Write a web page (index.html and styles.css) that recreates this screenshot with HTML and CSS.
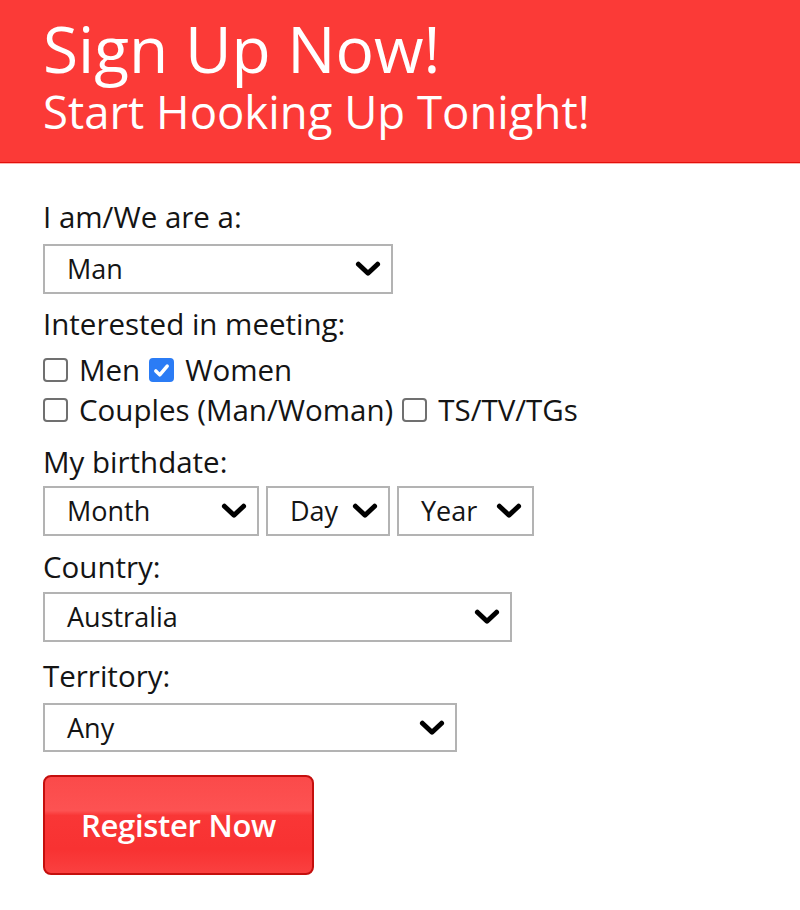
FILE: index.html
```html
<!DOCTYPE html>
<html lang="en">
<head>
<meta charset="utf-8">
<title>Sign Up Now!</title>
<link rel="stylesheet" href="styles.css">
</head>
<body>
<header class="banner">
  <h1 class="banner-title">Sign Up Now!</h1>
  <p class="banner-sub">Start Hooking Up Tonight!</p>
</header>
<form class="signup">
  <div class="field-label mb9">I am/We are a:</div>
  <div class="select select-man"><span class="select-text">Man</span><svg class="chev" viewBox="0 0 24 15"><path d="M3 3 L12 11.5 L21 3"/></svg></div>

  <div class="field-label mb8">Interested in meeting:</div>
  <div class="check-group">
    <div class="check-row">
      <span class="box"></span><span class="check-text">Men</span>
      <span class="box box-on"><svg viewBox="0 0 24 24"><path d="M5.5 12.5 L10 17 L18.5 7"/></svg></span><span class="check-text">Women</span>
    </div>
    <div class="check-row">
      <span class="box"></span><span class="check-text">Couples (Man/Woman)</span>
      <span class="box"></span><span class="check-text">TS/TV/TGs</span>
    </div>
  </div>

  <div class="field-label mb6">My birthdate:</div>
  <div class="select-group">
    <div class="select select-month"><span class="select-text">Month</span><svg class="chev" viewBox="0 0 24 15"><path d="M3 3 L12 11.5 L21 3"/></svg></div>
    <div class="select select-day"><span class="select-text">Day</span><svg class="chev" viewBox="0 0 24 15"><path d="M3 3 L12 11.5 L21 3"/></svg></div>
    <div class="select select-year"><span class="select-text">Year</span><svg class="chev" viewBox="0 0 24 15"><path d="M3 3 L12 11.5 L21 3"/></svg></div>
  </div>

  <div class="field-label mb7">Country:</div>
  <div class="select select-country"><span class="select-text">Australia</span><svg class="chev" viewBox="0 0 24 15"><path d="M3 3 L12 11.5 L21 3"/></svg></div>

  <div class="field-label mb9">Territory:</div>
  <div class="select select-territory"><span class="select-text">Any</span><svg class="chev" viewBox="0 0 24 15"><path d="M3 3 L12 11.5 L21 3"/></svg></div>

  <button type="button" class="register">Register Now</button>
</form>
</body>
</html>
```
FILE: styles.css
```css
html, body {
  margin: 0;
  padding: 0;
  background: #fff;
}
body {
  font-family: "Open Sans", "Noto Sans", "Liberation Sans", sans-serif;
  color: #141414;
}
.banner {
  background: #fb3a37;
  height: 163px;
  box-sizing: border-box;
  padding: 15px 43px 0;
  border-bottom: 1px solid #e2100c;
  box-shadow: 0 1px 0 #ffb4b0;
  color: #fff;
}
.banner-title {
  margin: 0;
  font-weight: 400;
  font-size: 64px;
  line-height: 68px;
}
.banner-sub {
  margin: 0;
  font-size: 45.5px;
  line-height: 56px;
}
.signup {
  padding: 36px 43px 0;
}
.field-label {
  font-size: 29.5px;
  line-height: 36px;
}
.mb6 { margin-bottom: 6px; }
.mb7 { margin-bottom: 7px; }
.mb8 { margin-bottom: 8px; }
.mb9 { margin-bottom: 9px; }
.select {
  box-sizing: border-box;
  height: 50px;
  border: 2px solid #b3b3b3;
  display: flex;
  align-items: center;
  justify-content: space-between;
  padding: 0 10px 0 22px;
  margin-bottom: 13px;
  background: #fff;
}
.select-text {
  font-size: 27px;
  line-height: 36px;
}
.chev {
  width: 26px;
  height: 16px;
  flex: none;
}
.chev path {
  fill: none;
  stroke: #000;
  stroke-width: 4.6;
  stroke-linecap: round;
  stroke-linejoin: round;
}
.select-man {
  width: 350px;
  margin-bottom: 12px;
}
.select-group {
  display: flex;
  gap: 7px;
  margin-bottom: 13px;
}
.select-group .select {
  margin-bottom: 0;
}
.select-month { width: 216px; }
.select-day { width: 124px; }
.select-year { width: 137px; }
.select-country {
  width: 469px;
  margin-bottom: 16px;
}
.select-territory {
  width: 414px;
  height: 49px;
}
.check-group {
  margin-bottom: 14px;
}
.check-row {
  display: flex;
  align-items: center;
  height: 40px;
  font-size: 29.5px;
  line-height: 40px;
}
.box {
  box-sizing: border-box;
  width: 25px;
  height: 24px;
  border: 2px solid #707070;
  border-radius: 4px;
  margin-right: 11px;
  flex: none;
  display: flex;
  align-items: center;
  justify-content: center;
}
.check-text {
  margin-right: 9px;
}
.box-on {
  background: #2b7cf5;
  border-color: #2b7cf5;
}
.box-on svg {
  width: 23px;
  height: 23px;
}
.box-on path {
  fill: none;
  stroke: #fff;
  stroke-width: 4;
  stroke-linecap: round;
  stroke-linejoin: round;
}
.register {
  margin-top: 10px;
  width: 271px;
  height: 100px;
  border: 2px solid #c40f0d;
  border-radius: 8px;
  background: linear-gradient(to bottom, #fb4a4a 0%, #fd5252 35%, #f93636 40%, #f83232 75%, #fa4040 100%);
  color: #fff;
  font-family: "Open Sans", "Noto Sans", "Liberation Sans", sans-serif;
  font-size: 31px;
  font-weight: 600;
  letter-spacing: -0.3px;
  cursor: pointer;
  padding: 0;
}
```
